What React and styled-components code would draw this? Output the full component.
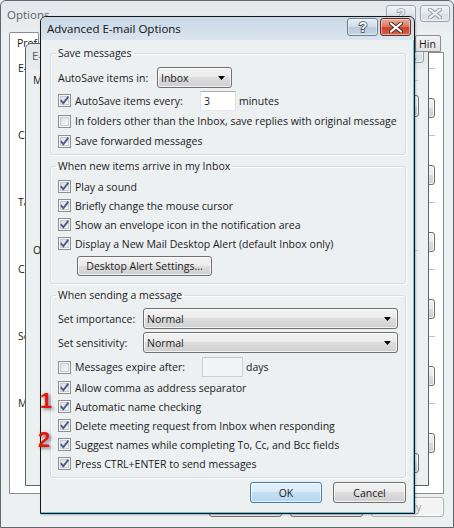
import React from "react";
import styled, { createGlobalStyle } from "styled-components";

const Global = createGlobalStyle`
  html, body { margin: 0; padding: 0; background: #ecf0f0; }
  body {
    font-family: "Open Sans", "Noto Sans", sans-serif;
    font-size: 10.5px;
    color: #1a1a1a;
  }
  * { box-sizing: border-box; }
`;

const Desktop = styled.div`
  position: relative;
  width: 454px;
  height: 528px;
  overflow: hidden;
`;

/* ---------- shared window chrome ---------- */

const CaptionButton = styled.div`
  width: ${(p) => p.$w || 30}px;
  height: ${(p) => p.$h || 17}px;
  border-radius: 3px;
  display: flex;
  align-items: center;
  justify-content: center;
  flex: none;
  border: 1px solid ${(p) => (p.$close && !p.$inactive ? "#6e2a1f" : p.$inactive ? "#98a3ae" : "#6f7f90")};
  background: ${(p) =>
    p.$close && !p.$inactive
      ? "linear-gradient(#e9ab9b 0%, #dd7b64 45%, #c6442c 55%, #d0674c 100%)"
      : p.$inactive
      ? "linear-gradient(#eef1f4 0%, #e2e7ec 50%, #d6dde4 51%, #dfe5ea 100%)"
      : "linear-gradient(#e6eef5 0%, #d2deea 45%, #b9cadb 55%, #c8d6e4 100%)"};
  box-shadow: inset 0 0 0 1px rgba(255, 255, 255, 0.45);
`;

const HelpGlyph = ({ inactive }) => (
  <svg width="12" height="14" viewBox="0 0 12 14">
    <text
      x="6"
      y="12"
      textAnchor="middle"
      fontFamily="Liberation Sans, sans-serif"
      fontWeight="bold"
      fontSize="14"
      fill={inactive ? "#eef1f4" : "#ffffff"}
      stroke={inactive ? "#8e9aa6" : "#3f4d5c"}
      strokeWidth="1.6"
      paintOrder="stroke"
    >
      ?
    </text>
  </svg>
);

const CloseGlyph = ({ inactive }) => (
  <svg width="14" height="11" viewBox="0 0 14 11">
    <path d="M2 1.5 L12 9.5 M12 1.5 L2 9.5" stroke={inactive ? "#8e9aa6" : "#4a2a22"} strokeWidth="4" strokeLinecap="square" />
    <path d="M2 1.5 L12 9.5 M12 1.5 L2 9.5" stroke={inactive ? "#f1f3f5" : "#ffffff"} strokeWidth="2" strokeLinecap="square" />
  </svg>
);

const Button = styled.div`
  width: ${(p) => p.$w}px;
  height: ${(p) => p.$h || 21}px;
  margin-top: ${(p) => p.$mt || 0}px;
  margin-left: ${(p) => p.$ml || 0}px;
  flex: none;
  display: flex;
  align-items: center;
  justify-content: center;
  border-radius: 3px;
  border: 1px solid ${(p) => (p.$default ? "#3c7fb1" : p.$disabled ? "#adb2b5" : "#707070")};
  background: ${(p) =>
    p.$default
      ? "linear-gradient(#e5f1fb 0%, #d9ebf9 50%, #c4dff5 50%, #b5d6f1 100%)"
      : p.$disabled
      ? "#f4f4f4"
      : "linear-gradient(#f2f2f2 0%, #ebebeb 50%, #dddddd 50%, #cfcfcf 100%)"};
  box-shadow: inset 0 0 0 1px rgba(255, 255, 255, 0.75);
  color: ${(p) => (p.$disabled ? "#a0a0a0" : "#1a1a1a")};
  white-space: nowrap;
  overflow: hidden;
`;

/* ---------- Options (back window) ---------- */

const Shell = styled.div`
  width: 454px;
  height: 528px;
  border: 1px solid #5f666d;
  border-radius: 6px 6px 0 0;
  background: #ecf0f0;
  display: flex;
  flex-direction: column;
`;

const ShellTitle = styled.div`
  height: 31px;
  flex: none;
  display: flex;
  align-items: flex-start;
  padding: 4px 3px 0 6px;
  gap: 4px;
  background: linear-gradient(#e4e8ec, #e9eded);
  border-radius: 6px 6px 0 0;
`;

const CaptionText = styled.div`
  flex: 1;
  font-size: ${(p) => p.$size || 11.5}px;
  line-height: ${(p) => p.$lh || 20}px;
  color: ${(p) => (p.$inactive ? "#5c6166" : "#111")};
  white-space: nowrap;
  overflow: hidden;
`;

const TabStrip = styled.div`
  height: 20px;
  flex: none;
  margin: 0 9px 0 8px;
  display: flex;
  align-items: flex-end;
  justify-content: space-between;
`;

const Tab = styled.div`
  position: relative;
  z-index: ${(p) => (p.$raised ? 1 : "auto")};
  height: ${(p) => (p.$selected ? 21 : 17)}px;
  width: ${(p) => p.$w}px;
  margin-bottom: ${(p) => (p.$selected ? -1 : 0)}px;
  margin-right: ${(p) => (p.$selected ? 0 : 3)}px;
  border: 1px solid #898c95;
  border-bottom: ${(p) => (p.$selected ? "none" : "1px solid #898c95")};
  border-radius: 2px 2px 0 0;
  background: ${(p) => (p.$selected ? "#ffffff" : "linear-gradient(#f3f3f3, #e1e1e1)")};
  padding: ${(p) => (p.$selected ? "3px 0 0 7px" : "1px 0 0 3px")};
  line-height: 14px;
  white-space: nowrap;
  overflow: hidden;
`;

const TabPage = styled.div`
  flex: none;
  height: 442px;
  margin: 0 9px 0 8px;
  background: #ffffff;
  border: 1px solid #898c95;
  padding: 5px 8px 0 8px;
  display: flex;
  flex-direction: column;
`;

const PageSection = styled.div`
  height: 67px;
  flex: none;
  display: flex;
  flex-direction: column;
  align-items: flex-end;
`;

const SectionHead = styled.div`
  height: 20px;
  width: 100%;
  flex: none;
  margin-top: ${(p) => p.$mt || 0}px;
  display: flex;
  align-items: center;
  gap: 5px;
  white-space: nowrap;
  &::after {
    content: "";
    flex: 1;
    border-top: 1px solid ${(p) => p.$rule || "#b8c2ca"};
  }
`;

const ShellFooter = styled.div`
  flex: none;
  margin: 3px 9px 0 0;
  display: flex;
  justify-content: flex-end;
  gap: 8px;
`;

/* ---------- E-mail Options (middle window) ---------- */

const MidWindow = styled.div`
  position: absolute;
  left: 25px;
  top: 43px;
  width: 404px;
  height: 443px;
  border: 1px solid #5c6268;
  border-radius: 6px 6px 0 0;
  background: #ecf0f0;
  display: flex;
  flex-direction: column;
`;

const MidTitle = styled.div`
  height: 25px;
  flex: none;
  display: flex;
  align-items: flex-start;
  padding: 3px 4px 0 6px;
  gap: 4px;
  background: linear-gradient(#e0e6eb, #e8eced);
  border-radius: 6px 6px 0 0;
`;

const MidBody = styled.div`
  flex: 1;
  display: flex;
  flex-direction: column;
  align-items: flex-end;
  padding: 1px 9px 0 7px;
`;

/* ---------- Advanced E-mail Options (front dialog) ---------- */

const Dialog = styled.div`
  position: absolute;
  left: 40px;
  top: 16px;
  width: 375px;
  height: 498px;
  border: 1px solid #161616;
  border-radius: 6px 6px 0 0;
  background: #ecf0f0;
  box-shadow: inset -1px -1px 0 #5ec6ee, 1px 1px 2px rgba(0, 0, 0, 0.25);
  display: flex;
  flex-direction: column;
  z-index: 2;
`;

const DialogTitle = styled.div`
  height: 23px;
  flex: none;
  display: flex;
  align-items: flex-start;
  padding: 1px 3px 0 6px;
  gap: 2px;
  border-radius: 5px 5px 0 0;
  background: linear-gradient(#c9d8e6 0%, #d3dfea 60%, #dbe5ee 100%);
`;

const Client = styled.div`
  flex: 1;
  display: flex;
  flex-direction: column;
  gap: 4px;
  padding: 6px 8px 0 9px;
`;

const Group = styled.fieldset`
  margin: 0;
  min-width: 0;
  border: 1px solid #d3dde3;
  border-radius: 3px;
  box-shadow: inset 1px 1px 0 #fbfcfc, 1px 1px 0 #fbfcfc;
  padding: ${(p) => p.$pad};
  display: flex;
  flex-direction: column;
`;

const Legend = styled.legend`
  padding: 0 2px;
  margin-left: -2px;
  line-height: 14px;
  font-size: 10.5px;
`;

const Row = styled.div`
  height: ${(p) => p.$h || 19}px;
  margin-top: ${(p) => p.$mt || 0}px;
  flex: none;
  display: flex;
  align-items: center;
  gap: ${(p) => p.$gap || 0}px;
  white-space: nowrap;
`;

const FieldLabel = styled.span`
  width: ${(p) => p.$w}px;
  flex: none;
`;

const Check = styled.label`
  display: flex;
  align-items: center;
  gap: 4px;
  width: ${(p) => (p.$w ? `${p.$w}px` : "auto")};
  flex: none;
`;

const Box = styled.span`
  width: 13px;
  height: 13px;
  flex: none;
  display: flex;
  align-items: center;
  justify-content: center;
  border: 1px solid #8e8f8f;
  background: linear-gradient(135deg, #d3d6da 0%, #eceef0 55%, #fbfbfb 100%);
  box-shadow: inset 0 0 0 1px #f5f5f5, inset 0 0 0 2px #c7ccd2;
`;

const CheckItem = ({ checked, w, children }) => (
  <Check $w={w}>
    <Box>
      {checked && (
        <svg width="11" height="11" viewBox="0 0 11 11">
          <path d="M1.8 5.2 L4.3 8.3 L9.4 1.6" fill="none" stroke="#4b5b86" strokeWidth="1.9" />
        </svg>
      )}
    </Box>
    <span>{children}</span>
  </Check>
);

const Combo = styled.div`
  height: 21px;
  width: ${(p) => (p.$w ? `${p.$w}px` : "auto")};
  flex: ${(p) => (p.$w ? "none" : 1)};
  display: flex;
  align-items: center;
  justify-content: space-between;
  padding: 0 6px 0 3px;
  border: 1px solid #707070;
  border-radius: 3px;
  background: linear-gradient(#f2f2f2 0%, #ebebeb 50%, #dddddd 50%, #cfcfcf 100%);
  box-shadow: inset 0 0 0 1px rgba(255, 255, 255, 0.7);
`;

const ComboBox = ({ w, value }) => (
  <Combo $w={w}>
    <span>{value}</span>
    <svg width="7" height="4" viewBox="0 0 7 4">
      <path d="M0 0 H7 L3.5 4 Z" fill="#000" />
    </svg>
  </Combo>
);

const TextBox = styled.div`
  width: ${(p) => p.$w}px;
  height: 20px;
  flex: none;
  padding: 0 3px;
  display: flex;
  align-items: center;
  border: 1px solid;
  border-color: ${(p) =>
    p.$disabled ? "#bcc6cd #c9d1d7 #c9d1d7 #c9d1d7" : "#abadb3 #dbdfe6 #e3e9ef #e2e3ea"};
  background: ${(p) => (p.$disabled ? "#f2f4f4" : "#ffffff")};
`;

const Footer = styled.div`
  display: flex;
  justify-content: flex-end;
  gap: 11px;
`;

const Marker = styled.div`
  position: absolute;
  left: ${(p) => p.$x}px;
  top: ${(p) => p.$y}px;
  z-index: 3;
  font-family: "Liberation Sans", Arial, sans-serif;
  font-weight: bold;
  font-size: 22px;
  line-height: 22px;
  color: #e4150d;
  text-shadow: 2px 2px 3px rgba(0, 0, 0, 0.35), 0 0 4px rgba(0, 0, 0, 0.15);
`;

const pageSections = ["E-mail", "Calendar", "Tasks", "Contacts", "Search", "Mobile"];

export default function App() {
  return (
    <>
      <Global />
      <Desktop>
        <Shell>
          <ShellTitle>
            <CaptionText $inactive>Options</CaptionText>
            <CaptionButton $inactive>
              <HelpGlyph inactive />
            </CaptionButton>
            <CaptionButton $inactive $close>
              <CloseGlyph inactive />
            </CaptionButton>
          </ShellTitle>
          <TabStrip>
            <Tab $selected $w={30}>Prefe</Tab>
            <Tab $w={26} $raised>Hin</Tab>
          </TabStrip>
          <TabPage>
            {pageSections.map((name) => (
              <PageSection key={name}>
                <SectionHead>{name}</SectionHead>
                <Button $w={110} $h={20} $mt={20} />
              </PageSection>
            ))}
          </TabPage>
          <ShellFooter>
            <Button $w={73} $h={20} />
            <Button $w={73} $h={20} />
            <Button $w={73} $h={20} $disabled>Apply</Button>
          </ShellFooter>
        </Shell>

        <MidWindow>
          <MidTitle>
            <CaptionText $inactive $lh={18}>E-</CaptionText>
            <CaptionButton $inactive $h={16}>
              <HelpGlyph inactive />
            </CaptionButton>
            <CaptionButton $inactive $close $h={16}>
              <CloseGlyph inactive />
            </CaptionButton>
          </MidTitle>
          <MidBody>
            <SectionHead $rule="#c9d2d8">M</SectionHead>
            <Button $w={150} $h={22} $mt={5} />
            <SectionHead $rule="#c9d2d8" $mt={123}>O</SectionHead>
            <Button $w={73} $h={20} $mt={193} />
          </MidBody>
        </MidWindow>

        <Dialog>
          <DialogTitle>
            <CaptionText $lh={22}>Advanced E-mail Options</CaptionText>
            <CaptionButton $w={31} $h={18}>
              <HelpGlyph />
            </CaptionButton>
            <CaptionButton $w={31} $h={18} $close>
              <CloseGlyph />
            </CaptionButton>
          </DialogTitle>
          <Client>
            <Group $pad="7px 7px 3px 7px">
              <Legend>Save messages</Legend>
              <Row $h={21}>
                <FieldLabel $w={99}>AutoSave items in:</FieldLabel>
                <ComboBox w={75} value="Inbox" />
              </Row>
              <Row $h={21} $mt={2} $gap={3}>
                <CheckItem checked w={139}>AutoSave items every:</CheckItem>
                <TextBox $w={36}>3</TextBox>
                <span>minutes</span>
              </Row>
              <Row $h={20}>
                <CheckItem>In folders other than the Inbox, save replies with original message</CheckItem>
              </Row>
              <Row $h={20}>
                <CheckItem checked>Save forwarded messages</CheckItem>
              </Row>
            </Group>

            <Group $pad="4px 7px 7px 7px">
              <Legend>When new items arrive in my Inbox</Legend>
              <Row><CheckItem checked>Play a sound</CheckItem></Row>
              <Row><CheckItem checked>Briefly change the mouse cursor</CheckItem></Row>
              <Row><CheckItem checked>Show an envelope icon in the notification area</CheckItem></Row>
              <Row><CheckItem checked>Display a New Mail Desktop Alert (default Inbox only)</CheckItem></Row>
              <Row $h={20} $mt={3}>
                <Button $w={135} $h={20} $ml={19}>Desktop Alert Settings...</Button>
              </Row>
            </Group>

            <Group $pad="6px 7px 4px 7px">
              <Legend>When sending a message</Legend>
              <Row $h={21}>
                <FieldLabel $w={85}>Set importance:</FieldLabel>
                <ComboBox value="Normal" />
              </Row>
              <Row $h={21} $mt={3}>
                <FieldLabel $w={85}>Set sensitivity:</FieldLabel>
                <ComboBox value="Normal" />
              </Row>
              <Row $h={20} $mt={4} $gap={3}>
                <CheckItem w={141}>Messages expire after:</CheckItem>
                <TextBox $w={41} $disabled />
                <span>days</span>
              </Row>
              <Row $mt={1}><CheckItem checked>Allow comma as address separator</CheckItem></Row>
              <Row><CheckItem checked>Automatic name checking</CheckItem></Row>
              <Row><CheckItem checked>Delete meeting request from Inbox when responding</CheckItem></Row>
              <Row><CheckItem checked>Suggest names while completing To, Cc, and Bcc fields</CheckItem></Row>
              <Row><CheckItem checked>Press CTRL+ENTER to send messages</CheckItem></Row>
            </Group>

            <Footer>
              <Button $w={72} $default>OK</Button>
              <Button $w={73}>Cancel</Button>
            </Footer>
          </Client>
        </Dialog>

        <Marker $x={40} $y={390}>1</Marker>
        <Marker $x={38} $y={429}>2</Marker>
      </Desktop>
    </>
  );
}
